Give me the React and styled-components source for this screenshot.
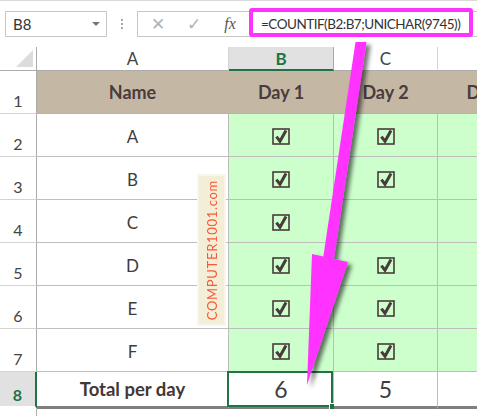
import React from 'react';
import styled, { createGlobalStyle, css } from 'styled-components';

const GlobalStyle = createGlobalStyle`
  html, body {
    margin: 0;
    padding: 0;
    background: #ffffff;
    overflow: hidden;
  }
  body {
    font-family: Lato, "Open Sans", Arial, sans-serif;
  }
`;

const COLS = [
  { key: 'A', width: 192 },
  { key: 'B', width: 105 },
  { key: 'C', width: 104 },
  { key: 'D', width: 104 },
];

const ROWS = [
  { n: 1, cells: ['Name', 'Day 1', 'Day 2', 'Day 3'], head: true },
  { n: 2, cells: ['A', true, true, false] },
  { n: 3, cells: ['B', true, true, false] },
  { n: 4, cells: ['C', true, false, false] },
  { n: 5, cells: ['D', true, true, false] },
  { n: 6, cells: ['E', true, true, false] },
  { n: 7, cells: ['F', true, true, false] },
  { n: 8, cells: ['Total per day', '6', '5', ''], total: true },
];

const CheckBox = () => (
  <svg width="18" height="17" viewBox="0 0 18 17">
    <rect x="1" y="1" width="16" height="15" fill="none" stroke="#4a3a3a" strokeWidth="1.6" />
    <path d="M4.4 8.6 L8 13.2 L14 2.6" fill="none" stroke="#4a3a3a" strokeWidth="3" strokeLinejoin="miter" />
  </svg>
);

const App = () => {
  return (
    <Page>
      <GlobalStyle />
      <FormulaBar>
        <NameBox>
          <span>B8</span>
          <Caret />
        </NameBox>
        <Dots>
          <i /><i /><i />
        </Dots>
        <FxBox>
          <FxButton $color="#b3b3b3">✕</FxButton>
          <FxButton $color="#b3b3b3">✓</FxButton>
          <FxLabel>fx</FxLabel>
        </FxBox>
        <FormulaInput>
          <Highlight />
          <FormulaText>=COUNTIF(B2:B7;UNICHAR(9745))</FormulaText>
        </FormulaInput>
      </FormulaBar>

      <Sheet>
        <Corner />
        {COLS.map((c) => (
          <ColHead key={c.key} $selected={c.key === 'B'}>{c.key}</ColHead>
        ))}

        {ROWS.map((row) => (
          <React.Fragment key={row.n}>
            <RowHead $selected={row.n === 8}>{row.n}</RowHead>
            {row.cells.map((v, i) => {
              const fill = row.head ? 'tan' : (i > 0 && !row.total ? 'green' : 'white');
              return (
                <Cell
                  key={i}
                  $fill={fill}
                  $head={row.head}
                  $total={row.total}
                  $big={row.total && i > 0}
                >
                  {v === true ? <CheckBox /> : v === false ? null : v}
                  {row.total && i === 1 && (
                    <Selection>
                      <Handle />
                    </Selection>
                  )}
                </Cell>
              );
            })}
          </React.Fragment>
        ))}

        <RowHead $empty />
        <Spacer />
      </Sheet>

      <Watermark>
        <span>COMPUTER1001.com</span>
      </Watermark>

      <Arrow width="477" height="416" viewBox="0 0 477 416">
        <defs>
          <filter id="shadow" x="-50%" y="-20%" width="200%" height="140%">
            <feDropShadow dx="4" dy="3" stdDeviation="2" floodColor="#000" floodOpacity="0.55" />
          </filter>
        </defs>
        <g filter="url(#shadow)" fill="#ff33ff">
          <polygon points="355.5,42 366.5,42 333.5,262 322.5,262" />
          <polygon points="312,254 348,262 307,385" />
        </g>
      </Arrow>
    </Page>
  );
};

const Page = styled.div`
  position: relative;
  width: 477px;
  height: 416px;
  overflow: hidden;
  background: #ffffff;
`;

const FormulaBar = styled.div`
  height: 47px;
  border-top: 1px solid #d9d9d9;
  display: flex;
  align-items: flex-start;
  padding: 10px 0 0 5px;
  box-sizing: border-box;
`;

const NameBox = styled.div`
  flex: 0 0 102px;
  height: 26px;
  box-sizing: border-box;
  border: 1px solid #c6c6c6;
  display: flex;
  align-items: center;
  justify-content: space-between;
  padding: 0 6px 0 7px;
  font-size: 15px;
  color: #333333;
`;

const Caret = styled.span`
  width: 0;
  height: 0;
  border-left: 4px solid transparent;
  border-right: 4px solid transparent;
  border-top: 4px solid #777777;
`;

const Dots = styled.div`
  flex: 0 0 30px;
  height: 26px;
  display: flex;
  flex-direction: column;
  align-items: center;
  justify-content: center;
  gap: 2px;

  i {
    width: 2px;
    height: 2px;
    background: #a6a6a6;
  }
`;

const FxBox = styled.div`
  flex: 0 0 112px;
  height: 26px;
  box-sizing: border-box;
  border: 1px solid #c6c6c6;
  border-right: none;
  display: flex;
  align-items: center;
  padding-left: 2px;
`;

const FxButton = styled.span`
  width: 36px;
  text-align: center;
  font-size: 17px;
  color: ${(p) => p.$color};
  font-family: "DejaVu Sans", sans-serif;
`;

const FxLabel = styled.span`
  width: 36px;
  text-align: center;
  font-family: "Liberation Serif", serif;
  font-style: italic;
  font-size: 16px;
  color: #555555;
`;

const FormulaInput = styled.div`
  position: relative;
  flex: 1 1 auto;
  min-width: 0;
  height: 26px;
  box-sizing: border-box;
  border-top: 1px solid #c6c6c6;
  border-bottom: 1px solid #c6c6c6;
  display: flex;
  align-items: center;
  padding-left: 12px;
`;

const Highlight = styled.div`
  position: absolute;
  top: -4px;
  left: 0;
  right: 4px;
  bottom: -1px;
  border: 4px solid #ff33ff;
  border-radius: 3px;
`;

const FormulaText = styled.span`
  position: relative;
  font-size: 13.5px;
  letter-spacing: -0.5px;
  color: #333333;
  white-space: nowrap;
`;

const Sheet = styled.div`
  display: grid;
  grid-template-columns: 37px ${COLS.map((c) => c.width + 'px').join(' ')};
  grid-template-rows: 24px repeat(7, 43px) 37px 30px;
`;

const Corner = styled.div`
  box-sizing: border-box;
  border-right: 1px solid #ababab;
  border-bottom: 1px solid #ababab;
  position: relative;

  &::after {
    content: "";
    position: absolute;
    right: 3px;
    bottom: 3px;
    width: 17px;
    height: 17px;
    background: #dcdcdc;
    clip-path: polygon(100% 0, 100% 100%, 0 100%);
  }
`;

const ColHead = styled.div`
  box-sizing: border-box;
  display: flex;
  align-items: center;
  justify-content: center;
  font-size: 17px;
  color: #444444;
  background: #ffffff;
  border-right: 1px solid #d4d4d4;
  border-bottom: 1px solid #ababab;

  ${(p) => p.$selected && css`
    background: #e1e1e1;
    color: #217346;
    font-weight: 700;
    border-bottom: 2px solid #217346;
    border-right-color: #ababab;
  `}
`;

const RowHead = styled.div`
  box-sizing: border-box;
  display: flex;
  align-items: flex-end;
  justify-content: center;
  padding-bottom: 3px;
  font-size: 16px;
  color: #444444;
  background: #ffffff;
  border-right: 1px solid #ababab;
  border-bottom: 1px solid #d4d4d4;

  ${(p) => p.$selected && css`
    background: #e1e1e1;
    color: #217346;
    font-weight: 700;
    border-right: 2px solid #217346;
    border-bottom: 3px solid #ffffff;
    padding-bottom: 2px;
  `}

  ${(p) => p.$empty && css`
    border-bottom: none;
  `}
`;

const fills = {
  tan: '#c4b8a4',
  green: '#ccffcc',
  white: '#ffffff',
};

const Cell = styled.div`
  position: relative;
  box-sizing: border-box;
  display: flex;
  align-items: center;
  justify-content: center;
  padding-top: 2px;
  background: ${(p) => fills[p.$fill]};
  border-right: 1px solid #bdbdbd;
  border-bottom: 1px solid #bdbdbd;
  font-size: 17px;
  color: #3d3d3d;
  white-space: nowrap;

  ${(p) => p.$head && css`
    font-weight: 700;
    font-size: 18px;
    color: #4a3c3c;
    border-right-color: ${fills.tan};
    border-bottom-color: #b3b3b3;
    padding-top: 0;
    padding-bottom: 1px;
  `}

  ${(p) => p.$total && css`
    font-weight: 700;
    font-size: 18.5px;
    color: #433737;
    border-bottom: 3px solid #7f7f7f;
    padding-top: 0;
  `}

  ${(p) => p.$big && css`
    font-weight: 400;
    font-size: 23px;
    color: #3d3d3d;
  `}
`;

const Selection = styled.div`
  position: absolute;
  left: -2px;
  top: -1px;
  width: 106px;
  height: 36px;
  box-sizing: border-box;
  border: 2px solid #217346;
  pointer-events: none;
`;

const Handle = styled.div`
  position: absolute;
  right: -5px;
  bottom: -5px;
  width: 7px;
  height: 7px;
  background: #217346;
  border: 1px solid #ffffff;
  box-sizing: border-box;
`;

const Spacer = styled.div`
  grid-column: 2 / -1;
`;

const Watermark = styled.div`
  position: absolute;
  left: 199px;
  top: 176px;
  width: 25px;
  height: 148px;
  background: #f2eed7;
  box-shadow: 0 0 0 2px #f8f6ea;
  display: flex;
  align-items: center;
  justify-content: center;

  span {
    writing-mode: vertical-rl;
    transform: rotate(180deg);
    font-family: Lato, "Open Sans", sans-serif;
    font-size: 13px;
    letter-spacing: 0.7px;
    color: #f85a38;
    white-space: nowrap;
  }
`;

const Arrow = styled.svg`
  position: absolute;
  left: 0;
  top: 0;
  pointer-events: none;
`;

export default App;
